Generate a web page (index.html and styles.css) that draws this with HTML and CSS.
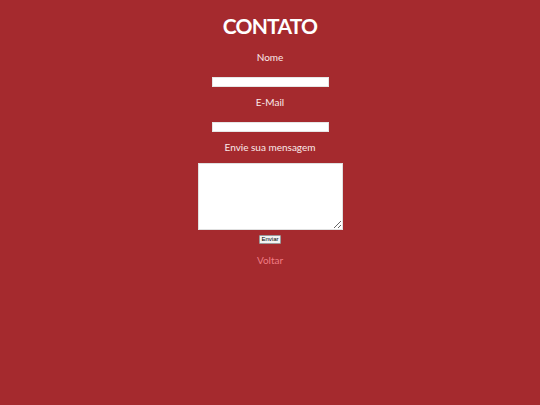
FILE: index.html
```html
<!DOCTYPE html>
<html lang="pt">
<head>
<meta charset="utf-8">
<title>Contato</title>
<link rel="stylesheet" href="styles.css">
</head>
<body>
<main class="page">
  <h1 class="title">CONTATO</h1>
  <form class="form">
    <label class="label label-first" for="nome">Nome</label>
    <input class="field" id="nome" type="text">
    <label class="label" for="email">E-Mail</label>
    <input class="field" id="email" type="text">
    <label class="label" for="msg">Envie sua mensagem</label>
    <textarea class="message" id="msg"></textarea>
    <button class="send" type="button">Enviar</button>
  </form>
  <a class="back" href="#">Voltar</a>
</main>
</body>
</html>
```
FILE: styles.css
```css
html, body {
  margin: 0;
  padding: 0;
  background: #a52a2e;
  height: 100%;
}
.page {
  display: flex;
  flex-direction: column;
  align-items: center;
  font-family: Lato, "Open Sans", sans-serif;
  color: #fff;
}
.title {
  margin: 12px 0 0 0;
  font-size: 21px;
  line-height: 28px;
  font-weight: 700;
  letter-spacing: -0.8px;
}
.form {
  display: flex;
  flex-direction: column;
  align-items: center;
}
.label {
  font-size: 10px;
  line-height: 14px;
  margin-top: 8px;
  margin-bottom: 13px;
  color: #fbeaea;
}
.label-first {
  margin-top: 10px;
}
.label:nth-of-type(3) {
  margin-bottom: 9px;
}
.field {
  box-sizing: border-box;
  width: 117px;
  height: 10px;
  border: 1px solid #e6e6e6;
  background: #fff;
  padding: 0;
  margin: 0;
}
.message {
  box-sizing: border-box;
  width: 145px;
  height: 67px;
  margin: 0;
  padding: 0;
  border: 1px solid #e0e0e0;
  background: #fff;
  resize: both;
}
.send {
  margin-top: 5px;
  box-sizing: border-box;
  width: 22px;
  height: 9px;
  padding: 0;
  font-family: "Liberation Sans", Arial, sans-serif;
  font-size: 6px;
  line-height: 7px;
  color: #000;
  background: #f2f2f2;
  border: 1px solid #9a9a9a;
  border-radius: 1px;
}
.back {
  margin-top: 9px;
  font-size: 10px;
  line-height: 14px;
  color: #ef7b83;
  text-decoration: none;
}
```
